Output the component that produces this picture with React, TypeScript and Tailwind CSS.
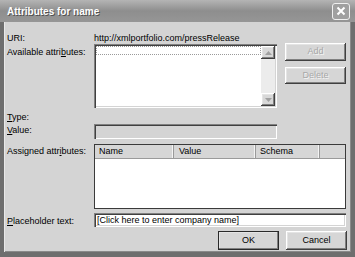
import React from 'react';

const raised =
  'shadow-[inset_-1px_-1px_#404040,inset_1px_1px_#ffffff,inset_-2px_-2px_#808080,inset_2px_2px_#e4e4e4]';
const sunken =
  'shadow-[inset_1px_1px_#808080,inset_2px_2px_#404040,inset_-1px_-1px_#ffffff,inset_-2px_-2px_#d4d4d4]';

function Label({ children, className = '' }: { children: React.ReactNode; className?: string }) {
  return <div className={`w-[87px] shrink-0 leading-[10px] ${className}`}>{children}</div>;
}

function Arrow({ up }: { up?: boolean }) {
  return (
    <div className={`w-[14px] h-[13px] bg-[#d8d8d8] flex items-center justify-center ${raised}`}>
      <svg width="7" height="4" viewBox="0 0 7 4">
        <path d={up ? 'M3.5 0L7 4H0Z' : 'M0 0H7L3.5 4Z'} fill="#a0a0a0" />
      </svg>
    </div>
  );
}

function Btn({ children, disabled, def }: { children: React.ReactNode; disabled?: boolean; def?: boolean }) {
  return (
    <div
      className={`w-[61px] flex items-center justify-center bg-[#d6d6d6] ${raised} ${
        def ? 'outline outline-1 outline-[#2a2a2a] -outline-offset-1' : ''
      } ${disabled ? 'text-[#a8a8a8] [text-shadow:1px_1px_#f4f4f4]' : 'text-black'}`}
    >
      {children}
    </div>
  );
}

export default function App() {
  return (
    <div className="w-[355px] h-[257px] bg-[#6e6e6e] flex flex-col text-[9px] text-black font-['Liberation_Sans',Arial,sans-serif] overflow-hidden">
      <div className="h-[22px] shrink-0 flex items-center justify-between pl-[7px] pr-[5px] bg-gradient-to-b from-[#b4b4b4] via-[#8e8e8e] to-[#969696]">
        <span className="text-white font-bold text-[10px] [text-shadow:1px_1px_#505050]">Attributes for name</span>
        <div className="w-[18px] h-[17px] rounded-[3px] border border-[#f0f0f0] bg-[#a0a0a0] flex items-center justify-center">
          <svg width="10" height="10" viewBox="0 0 10 10">
            <path d="M1.5 1.5L8.5 8.5M8.5 1.5L1.5 8.5" stroke="#ffffff" strokeWidth="2" />
          </svg>
        </div>
      </div>

      <div className="flex-1 mx-[4px] mb-[5px] bg-[#d4d4d4] shadow-[inset_1px_0_#e8e8e8,inset_-1px_0_#8a8a8a,inset_0_-1px_#8a8a8a] pl-[3px] pr-[4px] flex flex-col">
        <div className="flex mt-[11px] leading-[10px]">
          <Label>URI:</Label>
          <span>http://xmlportfolio.com/pressRelease</span>
        </div>

        <div className="flex mt-[0px]">
          <Label className="pt-[4px]">
            Available attri<u>b</u>utes:
          </Label>
          <div className={`mt-[1px] w-[183px] h-[64px] bg-white flex p-[2px] ${sunken}`}>
            <div className="flex-1 border border-dotted border-[#9a9a9a] h-[9px]" />
            <div className="w-[14px] flex flex-col bg-[#ececec]">
              <Arrow up />
              <div className="flex-1" />
              <Arrow />
            </div>
          </div>
          <div className="ml-[8px] flex flex-col">
            <div className="flex h-[18px]">
              <Btn disabled>Add</Btn>
            </div>
            <div className="flex h-[17px] mt-[6px]">
              <Btn disabled>Delete</Btn>
            </div>
          </div>
        </div>

        <div className="flex mt-[4px] leading-[10px]">
          <Label>
            <u>T</u>ype:
          </Label>
        </div>

        <div className="flex mt-[2px]">
          <Label className="pt-[1px]">
            <u>V</u>alue:
          </Label>
          <div className={`w-[183px] h-[15px] bg-[#d4d4d4] ${sunken}`} />
        </div>

        <div className="flex mt-[5px]">
          <Label className="pt-[2px]">
            Assigned attr<u>i</u>butes:
          </Label>
          <div className="w-[252px] h-[65px] bg-white border border-[#3a3a3a] flex flex-col">
            <div className="h-[14px] flex bg-[#d6d6d6] border-b border-[#9a9a9a] leading-[13px]">
              <div className="w-[79px] pl-[4px] border-r border-[#9a9a9a] shadow-[inset_-1px_0_#f4f4f4]">Name</div>
              <div className="w-[82px] pl-[5px] border-r border-[#9a9a9a] shadow-[inset_-1px_0_#f4f4f4]">Value</div>
              <div className="w-[64px] pl-[4px] border-r border-[#9a9a9a] shadow-[inset_-1px_0_#f4f4f4]">Schema</div>
              <div className="flex-1" />
            </div>
          </div>
        </div>

        <div className="flex mt-[4px]">
          <Label className="pt-[3px]">
            <u>P</u>laceholder text:
          </Label>
          <div className={`w-[252px] h-[14px] bg-white pl-[3px] leading-[14px] ${sunken}`}>
            [Click here to enter company name]
          </div>
        </div>

        <div className="flex justify-end gap-[7px] mt-[4px] h-[19px]">
          <Btn def>OK</Btn>
          <Btn>Cancel</Btn>
        </div>
      </div>
    </div>
  );
}
